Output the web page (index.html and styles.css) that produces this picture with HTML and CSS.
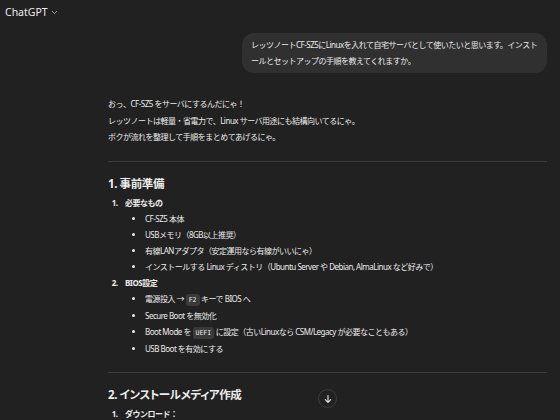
FILE: index.html
```html
<!DOCTYPE html>
<html lang="ja">
<head>
    <meta charset="UTF-8">
    <meta name="viewport" content="width=device-width, initial-scale=1.0">
    <title>ChatGPT</title>
    <link rel="stylesheet" href="styles.css">
</head>
<body>
  <div class="topbar">
    <span class="model">ChatGPT</span>
    <svg class="chevron" width="7" height="5" viewBox="0 0 7 5"><path d="M1 1.2 L3.5 3.6 L6 1.2" fill="none" stroke="#b4b4b4" stroke-width="0.9"/></svg>
  </div>

  <div class="thread">
    <div class="user-row">
      <div class="bubble">レッツノートCF-SZ5にLinuxを入れて自宅サーバとして使いたいと思います。インストールとセットアップの手順を教えてくれますか。</div>
    </div>

    <div class="answer">
      <p>おっ、CF-SZ5 をサーバにするんだにゃ！<br>
      レッツノートは軽量・省電力で、Linux サーバ用途にも結構向いてるにゃ。<br>
      ボクが流れを整理して手順をまとめてあげるにゃ。</p>

      <hr>

      <h3>1. 事前準備</h3>
      <ol>
        <li><strong>必要なもの</strong>
          <ul>
            <li>CF-SZ5 本体</li>
            <li>USBメモリ（8GB以上推奨）</li>
            <li>有線LANアダプタ（安定運用なら有線がいいにゃ）</li>
            <li>インストールする Linux ディストリ（Ubuntu Server や Debian, AlmaLinux など好みで）</li>
          </ul>
        </li>
        <li><strong>BIOS設定</strong>
          <ul>
            <li>電源投入 → <code>F2</code> キーで BIOS へ</li>
            <li>Secure Boot を無効化</li>
            <li>Boot Mode を <code>UEFI</code> に設定（古いLinuxなら CSM/Legacy が必要なこともある）</li>
            <li>USB Boot を有効にする</li>
          </ul>
        </li>
      </ol>

      <hr>

      <h3>2. インストールメディア作成</h3>
      <ol>
        <li><strong>ダウンロード：</strong></li>
      </ol>
    </div>
  </div>

  <button class="scroll-down" aria-label="Scroll down">
    <svg width="10" height="10" viewBox="0 0 10 10"><path d="M5 1.5 V8.3 M2.3 5.6 L5 8.3 L7.7 5.6" fill="none" stroke="#ececec" stroke-width="1.1" stroke-linecap="round" stroke-linejoin="round"/></svg>
  </button>
</body>
</html>
```

FILE: styles.css
```css
body {
  margin: 0;
  background-color: #212121;
  color: #ececec;
  font-family: "Noto Sans", "Noto Sans CJK JP", sans-serif;
  height: 420px;
  overflow: hidden;
}

.topbar {
  display: flex;
  align-items: center;
  gap: 3px;
  height: 24px;
  padding-left: 5px;
}

.model {
  font-size: 10.5px;
}

.thread {
  padding: 9px 13px 0 108px;
}

.user-row {
  display: flex;
  justify-content: flex-end;
}

.bubble {
  width: 291px;
  padding: 4px 5px 4px 9px;
  background-color: #303030;
  border-radius: 12px;
  font-size: 8px;
  line-height: 16px;
  letter-spacing: -0.5px;
}

.answer {
  margin-top: 23px;
  font-size: 8px;
  line-height: 16px;
  letter-spacing: -0.5px;
}

.answer p {
  margin: 0;
  line-height: 16.5px;
}

.answer hr {
  border: none;
  border-top: 1px solid #3c3c3c;
  margin: 15px 0 13px;
}

.answer h3 {
  margin: 0;
  font-size: 11.5px;
  line-height: 18px;
  font-weight: bold;
  font-feature-settings: "palt";
  letter-spacing: -0.4px;
}

.answer strong {
  font-weight: bold;
}

.answer ol {
  margin: 2px 0 0;
  padding-left: 17px;
}

.answer ol > li::marker {
  content: counter(list-item) ".\2003";
  font-weight: bold;
}

.answer ul {
  margin: 0;
  padding-left: 20px;
  list-style: disc;
}

.answer code {
  font-family: "DejaVu Sans Mono", monospace;
  font-size: 6.5px;
  letter-spacing: 0;
  background-color: #3a3a3a;
  border-radius: 3px;
  padding: 2px 3px;
}

.scroll-down {
  position: absolute;
  left: 318px;
  top: 389px;
  width: 19px;
  height: 19px;
  border-radius: 50%;
  border: 1px solid #3c3c3c;
  background-color: #212121;
  padding: 0;
  display: flex;
  align-items: center;
  justify-content: center;
}
```
